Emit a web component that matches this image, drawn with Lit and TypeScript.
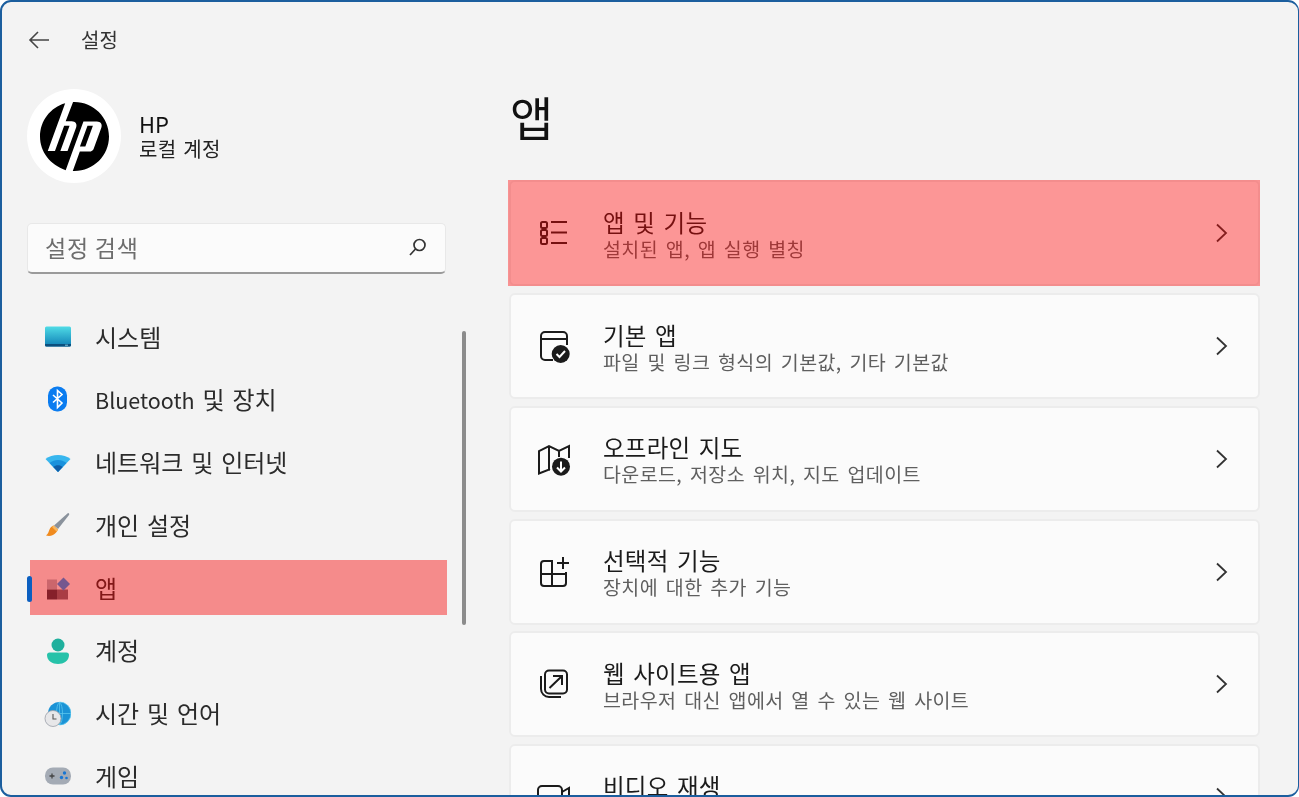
import { LitElement, html, css, svg } from "lit";
import { customElement } from "lit/decorators.js";

const navIcons = {
  system: svg`<defs><linearGradient id="sg" x1="0" y1="0" x2="0" y2="1"><stop offset="0" stop-color="#4fdbe6"/><stop offset="1" stop-color="#0f7fb5"/></linearGradient></defs><rect x="1" y="3.500" width="26" height="20" rx="1.500" fill="url(#sg)"/><path d="M1 21h26v1a1.500 1.500 0 0 1-1.500 1.500h-23A1.500 1.500 0 0 1 1 22z" fill="#0b4f7d"/><rect x="21" y="21.700" width="3" height="1" fill="#7fc6dd"/>`,
  bluetooth: svg`<rect x="4" y="0.500" width="19" height="25" rx="9" fill="#0a7cf0"/><path d="M9 9l9 8-4.500 4.500V4.500l4.500 4-9 8" fill="none" stroke="#fff" stroke-width="1.600"/>`,
  wifi: svg`<path d="M1.500 10C8 4.500 20 4.500 26.500 10L14 23z" fill="#37b6ee"/><path d="M5.500 14C10.500 10 17.500 10 22.500 14L14 23z" fill="#1a91dc"/><path d="M9.300 18C12 15.700 16 15.700 18.700 18L14 23z" fill="#0f5ea8"/>`,
  brush: svg`<path d="M24 2c1.200.3 1.500 1.200 1 2L14 18l-4-3.500z" fill="#8a929c"/><path d="M9.500 14.500l4.500 4c-1 2.500-3 4.500-5 5.500-2.500 1.200-5 1-7 .5 2-1.500 2.500-3.500 3.500-6 .8-2 2.500-3.500 4-4z" fill="#f08a1d"/><path d="M9.500 14.500l4.500 4-1.500 2-4.500-4.500z" fill="#f7b860"/>`,
  apps: svg`<rect x="3" y="5.500" width="10" height="10" fill="#cb666c"/><rect x="3" y="15.500" width="10" height="10" fill="#86202a"/><rect x="13" y="15.500" width="11" height="10" fill="#a93d44"/><path d="M19.500 3.500l6.500 6.500-6.500 6.500L13 10z" fill="#75578f"/>`,
  account: svg`<circle cx="14" cy="8" r="6.500" fill="#1fb09d"/><path d="M3 18c0-1.500 1-2.500 2.500-2.500h17c1.500 0 2.500 1 2.500 2.500 0 6-5.500 9-11 9S3 24 3 18z" fill="#26c2a9"/>`,
  time: svg`<circle cx="15.500" cy="13.500" r="11.500" fill="#1b93d6"/><path d="M15.500 2a11.500 11.500 0 0 1 0 23zM4 13.500h23M15.500 2c-4 3-4 20 0 23M15.500 2c4 3 4 20 0 23" fill="none" stroke="#62cdf0" stroke-width=".7"/><circle cx="9" cy="18.500" r="8" fill="#e7e7e9" stroke="#9aa0a8" stroke-width=".8"/><path d="M9 14v5h3.500" fill="none" stroke="#555" stroke-width="1.100"/>`,
  game: svg`<rect x="1" y="5.500" width="26" height="17" rx="8" fill="#a4abb5"/><path d="M5.500 14h5M8 11.500v5" stroke="#444" stroke-width="1.300"/><circle cx="20.500" cy="11" r="1.700" fill="#1976d2"/><circle cx="17.500" cy="15.500" r="1.700" fill="#1976d2"/><circle cx="22.500" cy="16" r="1.300" fill="#1976d2"/>`,
};

const cardIcons = {
  list: svg`<rect x="3" y="5" width="6" height="6" rx="1.500"/><rect x="3" y="13" width="6" height="6" rx="1.500"/><rect x="3" y="21" width="6" height="6" rx="1.500"/><path d="M13 5h16M13 15.500h16M13 26h16"/>`,
  defaults: svg`<path d="M15 30H7a4 4 0 0 1-4-4V6a4 4 0 0 1 4-4h18a4 4 0 0 1 4 4v9M3 9h26"/><circle cx="22.700" cy="24" r="9" fill="#1b1b1b" stroke="none"/><path d="M18.500 24l3 3 5.500-6" stroke="#fff" stroke-width="2"/>`,
  map: svg`<path d="M12 27l-1-.5-10 4V8l10-5 10 5 10-5v12M11 3v23.500M21 8v6"/><circle cx="23" cy="23.700" r="9" fill="#1b1b1b" stroke="none"/><path d="M23 18.500v10M19 24.500l4 4 4-4" stroke="#fff" stroke-width="2"/>`,
  optional: svg`<path d="M3 8a3 3 0 0 1 3-3h8v25H6a3 3 0 0 1-3-3zM3 18h25v9a3 3 0 0 1-3 3H14M28 18v-2"/><path d="M25 1v12M19 7h12"/>`,
  web: svg`<path d="M3 8v13a8 8 0 0 0 8 8h12"/><rect x="7" y="2.500" width="22" height="23" rx="4"/><path d="M11.500 20L24 8M15 8h9v9"/>`,
  video: svg`<rect x="0" y="5" width="24" height="20" rx="4"/><path d="M24 11l7-4v16l-7-4"/>`,
};

const NAV: [keyof typeof navIcons, unknown][] = [
  ["system", "시스템"],
  ["bluetooth", html`<span class="lat">Bluetooth</span> 및 장치`],
  ["wifi", "네트워크 및 인터넷"],
  ["brush", "개인 설정"],
  ["apps", "앱"],
  ["account", "계정"],
  ["time", "시간 및 언어"],
  ["game", "게임"],
];

const CARDS: [keyof typeof cardIcons, string, string][] = [
  ["list", "앱 및 기능", "설치된 앱, 앱 실행 별칭"],
  ["defaults", "기본 앱", "파일 및 링크 형식의 기본값, 기타 기본값"],
  ["map", "오프라인 지도", "다운로드, 저장소 위치, 지도 업데이트"],
  ["optional", "선택적 기능", "장치에 대한 추가 기능"],
  ["web", "웹 사이트용 앱", "브라우저 대신 앱에서 열 수 있는 웹 사이트"],
  ["video", "비디오 재생", ""],
];

@customElement("app-root")
export class AppRoot extends LitElement {
  static styles = css`
    :host {
      display: block;
      width: 1299px;
      height: 797px;
      overflow: hidden;
      background: #fff;
      font-family: "Noto Sans CJK KR", "Noto Sans", sans-serif;
      color: #1b1b1b;
    }
    .window {
      box-sizing: border-box;
      width: 1299px;
      height: 797px;
      border: 2px solid #1b5e9e;
      border-right-width: 1px;
      border-radius: 11px;
      background: #f3f3f3;
      overflow: hidden;
      position: relative;
      display: grid;
      grid-template-columns: 476px 1fr;
      grid-template-rows: 87px 1fr;
      filter: blur(0.4px);
    }
    .title {
      grid-column: 1;
      display: flex;
      align-items: center;
      padding: 0 0 12px 25px;
      gap: 30px;
      font-size: 20px;
      line-height: 28px;
      color: #333;
    }
    .title svg { width: 24px; height: 24px; fill: none; stroke: #444; stroke-width: 1.600; }
    .controls {
      grid-column: 2;
      justify-self: end;
      display: flex;
      align-items: flex-start;
      gap: 53px;
      padding: 13px 26px 0 0;
    }
    .controls svg { width: 18px; height: 20px; fill: none; stroke: #3a3a3a; stroke-width: 1.800; display: block; }
    .side {
      grid-column: 1;
      grid-row: 2;
      padding-left: 25px;
      position: relative;
    }
    .profile { display: flex; align-items: center; gap: 19px; height: 94px; }
    .avatar { width: 94px; height: 94px; border-radius: 50%; background: #fff; display: grid; place-items: center; }
    .avatar svg { width: 69px; height: 69px; fill: #000; display: block; }
    .who { display: flex; flex-direction: column; margin-left: -1px; }
    .who b { font-weight: 400; font-size: 22px; line-height: 26px; color: #111; }
    .who span { font-size: 20px; line-height: 26px; color: #222; letter-spacing: .3px; word-spacing: 2px; }
    .search {
      box-sizing: border-box;
      margin-top: 40px;
      width: 419px;
      height: 51px;
      background: #fbfbfb;
      border: 1px solid #e8e8e8;
      border-bottom: 2px solid #9a9a9a;
      border-radius: 5px;
      display: flex;
      align-items: center;
      justify-content: space-between;
      padding: 0 17px 2px 17px;
      font-size: 23px;
      line-height: 30px;
      letter-spacing: .8px;
      color: #6d6d6d;
    }
    .search svg { width: 20px; height: 20px; fill: none; stroke: #333; stroke-width: 1.700; }
    .nav { margin-top: 35px; display: flex; flex-direction: column; gap: 7.750px; width: 420px; }
    .nav-item {
      position: relative;
      height: 55px;
      display: flex;
      align-items: center;
      gap: 24px;
      padding-left: 17px;
      font-size: 24px;
      line-height: 32px;
      word-spacing: 2.500px;
      color: #2b2b2b;
      white-space: nowrap;
    }
    .lat { font-size: 21.500px; }
    .nav-item svg { width: 27px; height: 27px; flex: none; }
    .nav-item.sel::before {
      content: "";
      position: absolute;
      left: 0;
      top: 16px;
      width: 5px;
      height: 26px;
      background: #0b5fc0;
      border-radius: 3px;
      z-index: 1;
    }
    .nav-item.sel::after {
      content: "";
      position: absolute;
      left: 3px;
      right: 0;
      top: 0;
      bottom: 0;
      background: rgba(248, 0, 0, 0.428);
    }
    .nav-item.sel svg { position: relative; z-index: 1; }
    .scroll {
      position: absolute;
      left: 460px;
      top: 242px;
      width: 4px;
      height: 294px;
      border-radius: 2px;
      background: #8b8b8b;
    }
    .main { grid-column: 2; grid-row: 1 / 3; padding: 84px 38px 0 31px; min-height: 0; }
    h1 { margin: 0 0 34.250px 1px; font-size: 47px; line-height: 60px; font-weight: 400; color: #111; }
    .cards { display: flex; flex-direction: column; gap: 6.750px; }
    .card {
      position: relative;
      box-sizing: border-box;
      height: 106px;
      flex: none;
      background: #fbfbfb;
      border: 2px solid #ececec;
      border-radius: 6px;
      display: flex;
      align-items: center;
      padding: 0 30px 0 27px;
    }
    .card > svg.ic { width: 32px; height: 32px; fill: none; stroke: #1b1b1b; stroke-width: 2; flex: none; overflow: visible; }
    .txt { margin-left: 33px; flex: 1; display: flex; flex-direction: column; padding-top: 3px; }
    .txt b { font-weight: 400; font-size: 23.500px; line-height: 28px; color: #1b1b1b; letter-spacing: .2px; word-spacing: 3px; }
    .txt span { font-size: 19.500px; line-height: 26px; min-height: 26px; color: #5f5f5f; letter-spacing: .4px; word-spacing: 3px; }
    .chev { width: 14px; height: 20px; fill: none; stroke: #333; stroke-width: 1.800; flex: none; }
    .card.sel::after {
      content: "";
      position: absolute;
      inset: -2px -2px -2px -3px;
      background: rgba(255, 0, 0, 0.4);
    }
  `;

  render() {
    return html`<div class="window">
      <div class="title">
        <svg viewBox="0 0 24 24"><path d="M22 12H3M11 4l-8 8 8 8"/></svg>
        <span>설정</span>
      </div>
      <div class="controls">
        <svg viewBox="0 0 18 20"><path d="M1 9.500h16"/></svg>
        <svg viewBox="0 0 18 20"><rect x="2" y="2" width="14" height="14" rx="2"/></svg>
        <svg viewBox="0 0 18 20"><path d="M1.500 2l15 15M16.500 2l-15 15"/></svg>
      </div>
      <div class="side">
        <div class="profile">
          <div class="avatar">
            <svg viewBox="0 0 24 24"><path d="M12 24c-.2 0-.4-.01-.6-.01l2.450-6.740h3.380c.59 0 1.240-.45 1.440-1.010l2.660-7.320c.44-1.200-.25-2.180-1.530-2.180h-4.690l-3.940 10.830-2.230 6.130C3.500 21.850 0 17.340 0 12 0 6.500 3.700 1.870 8.750.45L6.480 6.700h-.01L2.700 17.070h2.500l3.200-8.800h1.880l-3.200 8.800h2.500l2.980-8.200c.44-1.200-.25-2.180-1.530-2.180H8.930L11.500.01c.17 0 .33-.01.5-.01 6.630 0 12 5.370 12 12s-5.370 12-12 12zM18.400 8.270h-1.880l-2.630 7.230h1.880z"/></svg>
          </div>
          <div class="who"><b>HP</b><span>로컬 계정</span></div>
        </div>
        <div class="search">
          <span>설정 검색</span>
          <svg viewBox="0 0 20 20"><circle cx="11.500" cy="8" r="5.500"/><path d="M7.500 12l-5.500 6"/></svg>
        </div>
        <div class="nav">
          ${NAV.map(
            ([k, label]) => html`<div class="nav-item ${k === "apps" ? "sel" : ""}">
              <svg viewBox="0 0 27 27">${navIcons[k]}</svg><span>${label}</span>
            </div>`
          )}
        </div>
        <div class="scroll"></div>
      </div>
      <div class="main">
        <h1>앱</h1>
        <div class="cards">
          ${CARDS.map(
            ([k, t, s], i) => html`<div class="card ${i === 0 ? "sel" : ""}">
              <svg class="ic" viewBox="0 0 32 32">${cardIcons[k]}</svg>
              <div class="txt"><b>${t}</b><span>${s}</span></div>
              <svg class="chev" viewBox="0 0 14 20"><path d="M3 1.500l9 8.500-9 8.500"/></svg>
            </div>`
          )}
        </div>
      </div>
    </div>`;
  }
}
